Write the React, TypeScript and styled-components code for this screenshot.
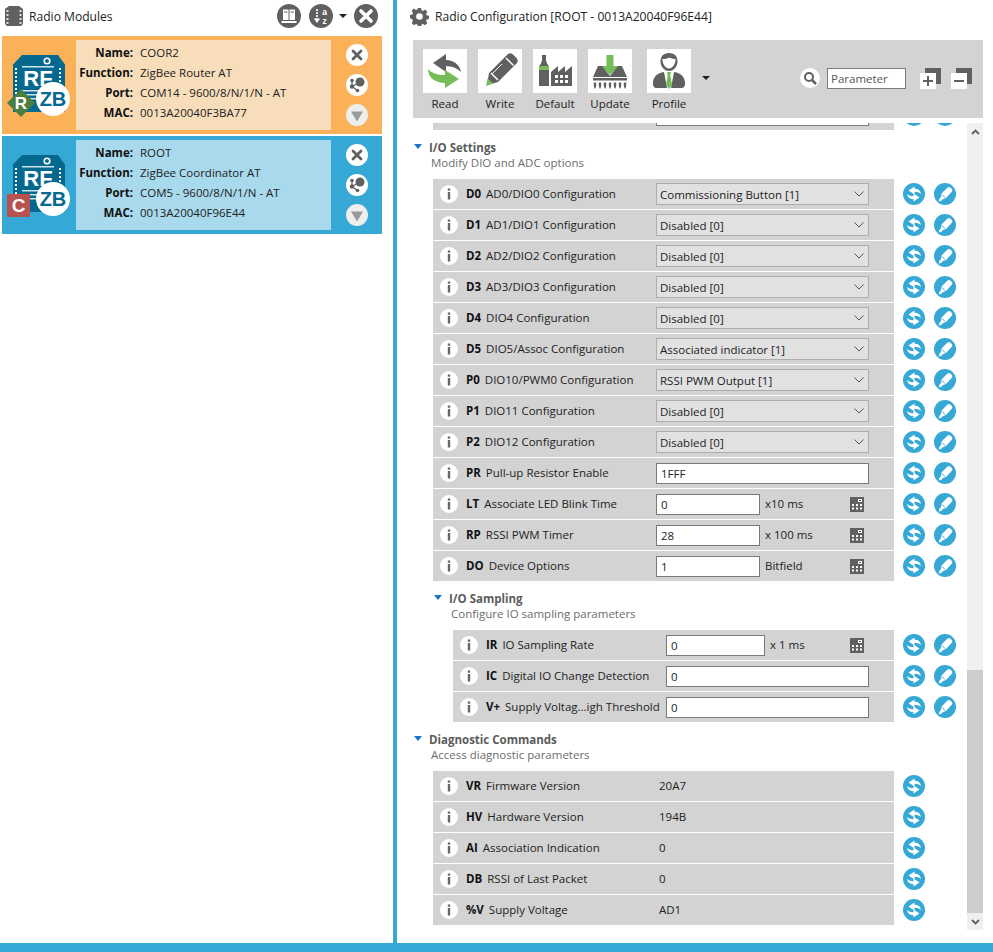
import React from 'react';
import styled, { createGlobalStyle } from 'styled-components';

const BLUE = '#36a8d6';
const GRAY = '#d3d3d3';
const ICON = '#606060';
const GREEN = '#76bd5a';

const Global = createGlobalStyle`
  html, body { margin: 0; padding: 0; background: #fff; overflow: hidden; }
  body { font-family: "Open Sans", "Noto Sans", sans-serif; font-size: 11.5px; color: #111; }
`;

const Page = styled.div`
  width: 993px;
  height: 952px;
  display: flex;
  flex-direction: column;
`;

const Main = styled.div`
  flex: 1;
  min-height: 0;
  display: flex;
`;

const BottomBar = styled.div`
  height: 9px;
  background: ${BLUE};
`;

const LeftPanel = styled.div`
  width: 393px;
  padding: 0 11px 0 2px;
  box-sizing: border-box;
`;

const Divider = styled.div`
  width: 4px;
  background: ${BLUE};
`;

const LeftHeader = styled.div`
  height: 36px;
  display: flex;
  align-items: center;
  padding: 0 4px 4px 3px;
  box-sizing: border-box;
`;

const PanelTitle = styled.div`
  font-size: 12.1px;
  color: #222;
  margin-left: 6px;
  flex: 1;
`;

const HeaderButton = styled.div<{ $gap?: number }>`
  width: 24px;
  height: 24px;
  margin-left: ${p => p.$gap ?? 0}px;
  svg { display: block; }
`;

const SmallCaret = styled.div<{ $left: number; $right: number }>`
  width: 0;
  height: 0;
  border-left: 4px solid transparent;
  border-right: 4px solid transparent;
  border-top: 4px solid #222;
  margin: 0 ${p => p.$right}px 0 ${p => p.$left}px;
`;

const Card = styled.div<{ $bg: string }>`
  height: 98px;
  background: ${p => p.$bg};
  display: flex;
  align-items: center;
  margin-bottom: 2px;
`;

const ModuleIcon = styled.div`
  width: 74px;
  height: 98px;
  flex: none;
  svg { display: block; }
`;

const CardInfo = styled.div<{ $bg: string }>`
  width: 255px;
  height: 90px;
  box-sizing: border-box;
  padding-bottom: 6px;
  background: ${p => p.$bg};
  display: grid;
  grid-template-columns: 57px 1fr;
  grid-auto-rows: 20px;
  column-gap: 7px;
  align-content: center;
  align-items: center;
`;

const CardLabel = styled.div`
  font-weight: 700;
  text-align: right;
  color: #111;
`;

const CardValue = styled.div`
  color: #222;
  white-space: nowrap;
`;

const CardActions = styled.div`
  width: 51px;
  display: flex;
  flex-direction: column;
  align-items: center;
  gap: 8px;
  svg { display: block; }
`;

const RightPanel = styled.div`
  flex: 1;
  min-width: 0;
  display: flex;
  flex-direction: column;
  padding: 0 10px 13px 16px;
`;

const RightHeader = styled.div`
  height: 40px;
  display: flex;
  align-items: center;
  padding: 0 0 8px 0;
  box-sizing: border-box;
  svg { display: block; margin-left: -3px; }
`;

const Toolbar = styled.div`
  height: 78px;
  flex: none;
  background: ${GRAY};
  display: flex;
  padding: 9px 0 0 10px;
  box-sizing: border-box;
  margin-bottom: 5px;
`;

const ToolButton = styled.div<{ $gap: number }>`
  width: 44px;
  margin-right: ${p => p.$gap}px;
  display: flex;
  flex-direction: column;
  align-items: center;
`;

const ToolTile = styled.div`
  width: 44px;
  height: 44px;
  background: #fff;
  svg { display: block; }
`;

const ToolLabel = styled.div`
  margin-top: 3px;
  line-height: 16px;
  color: #222;
  white-space: nowrap;
`;

const ProfileCaret = styled(SmallCaret)`
  margin-top: 27px;
  align-self: flex-start;
`;

const SearchGroup = styled.div`
  margin-left: auto;
  display: flex;
  align-items: flex-start;
  padding-top: 19px;
  padding-right: 11px;
  svg { display: block; }
`;

const SearchInput = styled.div`
  width: 79px;
  height: 21px;
  box-sizing: border-box;
  border: 1px solid #7a7a7a;
  background: #fff;
  margin: 0 14px 0 7px;
  padding-left: 3px;
  line-height: 19px;
  color: #555;
`;

const FoldButton = styled.div`
  width: 21px;
  height: 21px;
  margin-right: 10px;
  &:last-child { margin-right: 0; }
`;

const Body = styled.div`
  flex: 1;
  min-height: 0;
  display: flex;
`;

const Content = styled.div`
  flex: 1;
  min-width: 0;
  overflow: hidden;
`;

const Scrolled = styled.div`
  margin-top: -23px;
`;

const ScrollBar = styled.div`
  width: 16px;
  display: flex;
  flex-direction: column;
  background: #f0f0f0;
  svg { display: block; }
`;

const ScrollArrow = styled.div`
  height: 17px;
  display: flex;
  align-items: center;
  justify-content: center;
`;

const ScrollTrack = styled.div`
  flex: 1;
  display: flex;
  flex-direction: column;
  justify-content: flex-end;
`;

const ScrollThumb = styled.div`
  height: 243px;
  background: #cdcdcd;
`;

const Section = styled.div<{ $indent: number }>`
  position: relative;
  padding-left: ${p => p.$indent}px;
  height: 48px;
`;

const SectionCaret = styled.div<{ $left: number }>`
  position: absolute;
  left: ${p => p.$left}px;
  top: 13px;
  width: 0;
  height: 0;
  border-left: 4px solid transparent;
  border-right: 4px solid transparent;
  border-top: 5px solid #1373c6;
`;

const SectionTitle = styled.div`
  padding-top: 9px;
  font-weight: 700;
  line-height: 15px;
  color: #5c5c5c;
`;

const SectionSub = styled.div`
  padding-left: 2px;
  line-height: 16px;
  color: #6c6c6c;
`;

const Line = styled.div<{ $indent: number }>`
  display: flex;
  margin-left: ${p => p.$indent}px;
  margin-bottom: 1px;
`;

const Row = styled.div<{ $labelWidth: number }>`
  flex: 1;
  height: 30px;
  background: ${GRAY};
  display: grid;
  grid-template-columns: ${p => p.$labelWidth}px 1fr;
  align-items: center;
  margin-right: 9px;
`;

const RowLabel = styled.div`
  display: flex;
  align-items: center;
  padding-left: 7px;
  white-space: nowrap;
  overflow: hidden;
  svg { display: block; flex: none; margin-right: 8px; }
`;

const Code = styled.span`
  font-weight: 700;
  color: #111;
  margin: 0 5px 2px 0;
`;

const Desc = styled.span`
  color: #222;
  margin-bottom: 2px;
`;

const Control = styled.div`
  display: flex;
  align-items: center;
  padding-right: 25px;
`;

const Select = styled.div`
  flex: 1;
  height: 22px;
  box-sizing: border-box;
  border: 1px solid #adadad;
  background: #e1e1e1;
  padding: 0 4px 0 3px;
  display: flex;
  align-items: center;
  justify-content: space-between;
  color: #222;
  svg { display: block; }
`;

const TextInput = styled.div<{ $width?: number }>`
  ${p => (p.$width ? `width: ${p.$width}px;` : 'flex: 1;')}
  height: 21px;
  box-sizing: border-box;
  border: 1px solid #7a7a7a;
  background: #fff;
  padding-left: 4px;
  line-height: 19px;
  color: #222;
`;

const Unit = styled.div`
  flex: 1;
  margin: 0 0 2px 5px;
  color: #222;
  white-space: nowrap;
`;

const CalcSlot = styled.div`
  margin-right: 5px;
  svg { display: block; }
`;

const ValueText = styled.div`
  color: #222;
  margin-bottom: 2px;
`;

const Actions = styled.div`
  width: 53px;
  display: flex;
  gap: 9px;
  flex: none;
  align-items: center;
  margin-right: 11px;
  svg { display: block; }
`;

const Info = () => (
  <svg width="18" height="18" viewBox="0 0 18 18">
    <circle cx="9" cy="9" r="9" fill="#fff" />
    <rect x="7.800" y="3.500" width="2.400" height="2.200" fill="#666" />
    <rect x="7.800" y="7" width="2.400" height="7.500" fill="#666" />
  </svg>
);

const SyncIcon = () => (
  <svg width="22" height="22" viewBox="0 0 22 22">
    <circle cx="11" cy="11" r="11" fill={BLUE} />
    <path d="M18 11c-.6-3.500-3.200-5.400-6.500-5.100V3.400L5.500 7.500l6 4V8.800c2.300-.2 4.200.6 6.500 2.200z" fill="#fff" />
    <path d="M4 11c.6 3.500 3.200 5.400 6.500 5.100v2.500l6-4.100-6-4v2.700c-2.300.2-4.200-.6-6.500-2.200z" fill="#fff" />
  </svg>
);

const WriteIcon = () => (
  <svg width="22" height="22" viewBox="0 0 22 22">
    <circle cx="11" cy="11" r="11" fill={BLUE} />
    <path d="M13.500 4.500c1-.8 2-.7 2.800 0l1.500 1.500c.8.900.8 1.900 0 2.800L12 15l-3 1-1.500 1.800-2.800.7.700-2.800L7 14l.5-3.500z" fill="#fff" />
    <path d="M8 11.500l3 3" stroke={BLUE} strokeWidth="1" fill="none" />
  </svg>
);

const CalcIcon = () => (
  <svg width="14" height="15" viewBox="0 0 14 15">
    <rect width="14" height="15" fill={ICON} />
    <rect x="8" y="2" width="4" height="3" fill="#fff" />
    <rect x="9" y="3" width="2" height="1" fill={ICON} />
    {[0, 1].map(r =>
      [0, 1, 2].map(c => <rect key={`${r}-${c}`} x={2 + c * 4} y={7 + r * 3.5} width="2" height="2" fill="#fff" />)
    )}
  </svg>
);

const Chevron = () => (
  <svg width="10" height="6" viewBox="0 0 10 6">
    <path d="M.5.5L5 5 9.500.5" fill="none" stroke="#555" strokeWidth="1" />
  </svg>
);

const ChipIcon = () => (
  <svg width="18" height="20" viewBox="0 0 18 20">
    <path d="M4 0h10l4 3v15l-2 2H2l-2-2V3z" fill={ICON} />
    {[4, 8, 12, 16].map(y => (
      <g key={y}>
        <rect x="1.500" y={y} width="2" height="2" fill="#ddd" />
        <rect x="14.500" y={y} width="2" height="2" fill="#ddd" />
      </g>
    ))}
  </svg>
);

const BookIcon = () => (
  <svg width="24" height="24" viewBox="0 0 24 24">
    <circle cx="12" cy="12" r="12" fill={ICON} />
    <rect x="6" y="5.500" width="5.500" height="10.500" fill="#fff" />
    <rect x="12.500" y="5.500" width="5.500" height="10.500" fill="#fff" />
    <rect x="7" y="7.500" width="3.500" height="1" fill={ICON} />
    <rect x="13.500" y="7.500" width="3.500" height="1" fill={ICON} />
    <rect x="4.500" y="17" width="15" height="2" fill="#fff" />
  </svg>
);

const SortIcon = () => (
  <svg width="24" height="24" viewBox="0 0 24 24">
    <circle cx="12" cy="12" r="12" fill={ICON} />
    <path d="M8 5v11" stroke="#fff" strokeWidth="1.600" strokeDasharray="2 1" />
    <path d="M4.800 14.500h6.400L8 19z" fill="#fff" />
    <path d="M13 3.500h5v2h-5z" fill="none" />
    <text x="15.500" y="10.500" fontSize="8.500" fontWeight="700" fill="#fff" textAnchor="middle" fontFamily="Liberation Sans, sans-serif">a</text>
    <text x="15.500" y="20" fontSize="8.500" fontWeight="700" fill="#fff" textAnchor="middle" fontFamily="Liberation Sans, sans-serif">z</text>
  </svg>
);

const CloseDark = () => (
  <svg width="24" height="24" viewBox="0 0 24 24">
    <circle cx="12" cy="12" r="12" fill={ICON} />
    <path d="M7 7l10 10M17 7L7 17" stroke="#fff" strokeWidth="3.600" strokeLinecap="round" />
  </svg>
);

const CardClose = () => (
  <svg width="22" height="22" viewBox="0 0 22 22">
    <circle cx="11" cy="11" r="11" fill="#fff" />
    <path d="M7 7l8 8M15 7l-8 8" stroke={ICON} strokeWidth="2.800" strokeLinecap="round" />
  </svg>
);

const CardNetwork = () => (
  <svg width="22" height="22" viewBox="0 0 22 22">
    <circle cx="11" cy="11" r="11" fill="#fff" />
    <path d="M6 6.500v6M6 12.500L14 8M6 12.500l5.500 4" stroke={ICON} strokeWidth="1.200" />
    <circle cx="14" cy="8" r="4.500" fill={ICON} />
    <circle cx="6" cy="6.500" r="1.800" fill={ICON} />
    <circle cx="6" cy="12.500" r="2.200" fill={ICON} />
    <circle cx="11.500" cy="16.500" r="1.800" fill={ICON} />
  </svg>
);

const CardExpand = () => (
  <svg width="22" height="22" viewBox="0 0 22 22">
    <circle cx="11" cy="11" r="11" fill="#eeeeee" />
    <path d="M5 7.500h12L11 17.500z" fill="#9a9a9a" />
  </svg>
);

const ModuleGlyph = ({ role }: { role: 'R' | 'C' }) => (
  <svg width="74" height="98" viewBox="0 0 74 98">
    <path d="M20 19h36l7 9.500V76H11V28.500z" fill="#05698f" />
    <circle cx="45" cy="25" r="2.800" fill="none" stroke="#fff" strokeWidth="1.600" />
    <rect x="20" y="30" width="32" height="1.500" fill="#cfe3ec" />
    {[32, 36, 40, 44, 48, 52, 56, 60].map(y => (
      <g key={y}>
        <rect x="13" y={y} width="2" height="2" fill="#fff" />
        <rect x="57" y={y} width="2" height="2" fill="#fff" />
      </g>
    ))}
    <text x="36" y="50" fontSize="22" fontWeight="700" fill="#fff" textAnchor="middle" fontFamily="Liberation Sans, sans-serif">RF</text>
    <rect x="20" y="54" width="24" height="1.500" fill="#cfe3ec" />
    <rect x="20" y="58" width="24" height="1.500" fill="#cfe3ec" />
    <rect x="20" y="62" width="24" height="1.500" fill="#cfe3ec" />
    <circle cx="51" cy="63" r="17" fill="#fff" />
    <text x="51" y="70" fontSize="20" fontWeight="700" fill="#05698f" textAnchor="middle" fontFamily="Liberation Sans, sans-serif">ZB</text>
    {role === 'R' ? (
      <>
        <path d="M19 53l14 14-14 14L5 67z" fill="#4b7f3f" />
        <text x="19" y="73" fontSize="17" fontWeight="700" fill="#fff" textAnchor="middle" fontFamily="Liberation Sans, sans-serif">R</text>
      </>
    ) : (
      <>
        <rect x="5" y="58" width="23" height="23" fill="#b9514f" />
        <text x="16.500" y="75.500" fontSize="19" fontWeight="700" fill="#fff" textAnchor="middle" fontFamily="Liberation Sans, sans-serif">C</text>
      </>
    )}
  </svg>
);

const ReadGlyph = () => (
  <svg width="44" height="44" viewBox="0 0 44 44">
    <path d="M38 23c-1-7-7-12-15-12V5L10 14l13 9v-6c6 0 11 2 15 6z" fill={ICON} />
    <path d="M5 20c0 9 8 14 17 14v5l14-9-14-9v5c-8 0-13-2-17-6z" fill={GREEN} />
  </svg>
);

const WriteGlyph = () => (
  <svg width="44" height="44" viewBox="0 0 44 44">
    <path d="M30 5c2-1 3-1 5 .5l3.500 3.500c1.500 2 1.500 3 .5 5L20 33l-11 3 2-12z" fill={ICON} />
    <path d="M28 9l7.500 7.500M13 24l7 7" stroke="#fff" strokeWidth="1.500" fill="none" />
    <path d="M24 15L14 25" stroke="#fff" strokeWidth="1" fill="none" />
    <path d="M8 37l1.500-7.500 6 5z" fill={GREEN} />
  </svg>
);

const DefaultGlyph = () => (
  <svg width="44" height="44" viewBox="0 0 44 44">
    <path d="M6 37V18c0-2 3-3 3-8V6h4v4c0 5 3 6 3 8v19z" fill={ICON} />
    <rect x="6" y="17" width="10" height="4" fill={GREEN} />
    <path d="M18 37V23l7-6v6l7-6v6l7-6v20z" fill={ICON} />
    {[0, 1].map(r =>
      [0, 1, 2].map(c => <rect key={`${r}-${c}`} x={22 + c * 5} y={26 + r * 5} width="3" height="3" fill="#fff" />)
    )}
  </svg>
);

const UpdateGlyph = () => (
  <svg width="44" height="44" viewBox="0 0 44 44">
    <path d="M18.500 6h7v11h5.500L22 26l-9-9h5.500z" fill={GREEN} />
    <path d="M10 17h4l8 10 8-10h4l5 11H5z" fill={ICON} />
    <rect x="5" y="29" width="34" height="2.500" fill={ICON} />
    {[7, 12, 17, 22, 27, 32, 37].map(x => (
      <path key={x} d="M0 0h2.400v3l-.7 3h-1l-.7-3z" transform={`translate(${x - 1.2} 33.500)`} fill={ICON} />
    ))}
  </svg>
);

const ProfileGlyph = () => (
  <svg width="44" height="44" viewBox="0 0 44 44">
    <path d="M22 4c6 0 8.500 4 8.500 8.500S27 22 22 22s-8.500-5-8.500-9.500S16 4 22 4z" fill={ICON} />
    <path d="M22 8.500c3 1.500 5.500 1.500 6.500 1.500.3 4-2.500 9.500-6.500 9.500s-6.800-5.500-6.500-9.500c2.500 0 5-.5 6.500-1.500z" fill="#fff" />
    <path d="M17 23l3 16H10c-3 0-4.500-2-4-6 .5-5 4-9 11-10zM27 23l-3 16h10c3 0 4.500-2 4-6-.5-5-4-9-11-10z" fill={ICON} />
    <path d="M20 23h4l-.7 3 1.700 10-3 4-3-4 1.700-10z" fill={GREEN} />
  </svg>
);

const SearchIcon = () => (
  <svg width="20" height="20" viewBox="0 0 20 20">
    <circle cx="10" cy="10" r="10" fill="#fff" />
    <circle cx="9" cy="9" r="4" fill="none" stroke={ICON} strokeWidth="2" />
    <path d="M12 12l4 4" stroke={ICON} strokeWidth="2.500" />
  </svg>
);

const Fold = ({ plus }: { plus?: boolean }) => (
  <svg width="21" height="21" viewBox="0 0 21 21">
    <rect x="5" width="16" height="16" fill={ICON} />
    <rect y="5" width="16" height="16" fill="#fff" />
    <rect x="3" y="12" width="10" height="2" fill={ICON} />
    {plus && <rect x="7" y="8" width="2" height="10" fill={ICON} />}
  </svg>
);

const GearIcon = () => (
  <svg width="19" height="19" viewBox="0 0 20 20">
    <path
      d="M8.300 1h3.400l.5 2.500 1.500.6 2.200-1.400 2.400 2.400-1.400 2.200.6 1.500 2.500.5v3.400l-2.500.5-.6 1.500 1.400 2.200-2.400 2.400-2.200-1.400-1.500.6-.5 2.500H8.300l-.5-2.500-1.500-.6-2.200 1.400-2.400-2.400 1.400-2.200-.6-1.500L0 11.700V8.300l2.500-.5.6-1.500-1.400-2.200 2.400-2.400 2.200 1.400 1.500-.6z"
      fill={ICON}
    />
    <circle cx="10" cy="10" r="3.500" fill="#fff" />
  </svg>
);

type Field =
  | { kind: 'select'; value: string }
  | { kind: 'text'; value: string }
  | { kind: 'num'; value: string; unit: string; width: number }
  | { kind: 'read'; value: string };

type Param = { code: string; desc: string; field: Field };

const ioRows: Param[] = [
  { code: 'D0', desc: 'AD0/DIO0 Configuration', field: { kind: 'select', value: 'Commissioning Button [1]' } },
  { code: 'D1', desc: 'AD1/DIO1 Configuration', field: { kind: 'select', value: 'Disabled [0]' } },
  { code: 'D2', desc: 'AD2/DIO2 Configuration', field: { kind: 'select', value: 'Disabled [0]' } },
  { code: 'D3', desc: 'AD3/DIO3 Configuration', field: { kind: 'select', value: 'Disabled [0]' } },
  { code: 'D4', desc: 'DIO4 Configuration', field: { kind: 'select', value: 'Disabled [0]' } },
  { code: 'D5', desc: 'DIO5/Assoc Configuration', field: { kind: 'select', value: 'Associated indicator [1]' } },
  { code: 'P0', desc: 'DIO10/PWM0 Configuration', field: { kind: 'select', value: 'RSSI PWM Output [1]' } },
  { code: 'P1', desc: 'DIO11 Configuration', field: { kind: 'select', value: 'Disabled [0]' } },
  { code: 'P2', desc: 'DIO12 Configuration', field: { kind: 'select', value: 'Disabled [0]' } },
  { code: 'PR', desc: 'Pull-up Resistor Enable', field: { kind: 'text', value: '1FFF' } },
  { code: 'LT', desc: 'Associate LED Blink Time', field: { kind: 'num', value: '0', unit: 'x10 ms', width: 104 } },
  { code: 'RP', desc: 'RSSI PWM Timer', field: { kind: 'num', value: '28', unit: 'x 100 ms', width: 104 } },
  { code: 'DO', desc: 'Device Options', field: { kind: 'num', value: '1', unit: 'Bitfield', width: 104 } },
];

const samplingRows: Param[] = [
  { code: 'IR', desc: 'IO Sampling Rate', field: { kind: 'num', value: '0', unit: 'x 1 ms', width: 99 } },
  { code: 'IC', desc: 'Digital IO Change Detection', field: { kind: 'text', value: '0' } },
  { code: 'V+', desc: 'Supply Voltag...igh Threshold', field: { kind: 'text', value: '0' } },
];

const diagRows: Param[] = [
  { code: 'VR', desc: 'Firmware Version', field: { kind: 'read', value: '20A7' } },
  { code: 'HV', desc: 'Hardware Version', field: { kind: 'read', value: '194B' } },
  { code: 'AI', desc: 'Association Indication', field: { kind: 'read', value: '0' } },
  { code: 'DB', desc: 'RSSI of Last Packet', field: { kind: 'read', value: '0' } },
  { code: '%V', desc: 'Supply Voltage', field: { kind: 'read', value: 'AD1' } },
];

const FieldView = ({ field }: { field: Field }) => {
  if (field.kind === 'select') {
    return (
      <Select>
        {field.value}
        <Chevron />
      </Select>
    );
  }
  if (field.kind === 'text') return <TextInput>{field.value}</TextInput>;
  if (field.kind === 'read') return <ValueText>{field.value}</ValueText>;
  return (
    <>
      <TextInput $width={field.width}>{field.value}</TextInput>
      <Unit>{field.unit}</Unit>
      <CalcSlot>
        <CalcIcon />
      </CalcSlot>
    </>
  );
};

const ParamLine = ({ item, indent, labelWidth }: { item: Param; indent: number; labelWidth: number }) => (
  <Line $indent={indent}>
    <Row $labelWidth={labelWidth}>
      <RowLabel>
        <Info />
        <Code>{item.code}</Code>
        <Desc>{item.desc}</Desc>
      </RowLabel>
      <Control>
        <FieldView field={item.field} />
      </Control>
    </Row>
    <Actions>
      <SyncIcon />
      {item.field.kind !== 'read' && <WriteIcon />}
    </Actions>
  </Line>
);

const modules = [
  {
    role: 'R' as const,
    bg: '#fbb158',
    inner: '#f8ddbb',
    name: 'COOR2',
    func: 'ZigBee Router AT',
    port: 'COM14 - 9600/8/N/1/N - AT',
    mac: '0013A20040F3BA77',
  },
  {
    role: 'C' as const,
    bg: BLUE,
    inner: '#a9d9ed',
    name: 'ROOT',
    func: 'ZigBee Coordinator AT',
    port: 'COM5 - 9600/8/N/1/N - AT',
    mac: '0013A20040F96E44',
  },
];

const tools = [
  { label: 'Read', icon: <ReadGlyph />, gap: 11 },
  { label: 'Write', icon: <WriteGlyph />, gap: 11 },
  { label: 'Default', icon: <DefaultGlyph />, gap: 11 },
  { label: 'Update', icon: <UpdateGlyph />, gap: 15 },
  { label: 'Profile', icon: <ProfileGlyph />, gap: 11 },
];

function App() {
  return (
    <Page>
      <Global />
      <Main>
        <LeftPanel>
          <LeftHeader>
            <ChipIcon />
            <PanelTitle>Radio Modules</PanelTitle>
            <HeaderButton>
              <BookIcon />
            </HeaderButton>
            <HeaderButton $gap={8}>
              <SortIcon />
            </HeaderButton>
            <SmallCaret $left={6} $right={7} />
            <HeaderButton>
              <CloseDark />
            </HeaderButton>
          </LeftHeader>
          {modules.map(m => (
            <Card key={m.name} $bg={m.bg}>
              <ModuleIcon>
                <ModuleGlyph role={m.role} />
              </ModuleIcon>
              <CardInfo $bg={m.inner}>
                <CardLabel>Name:</CardLabel>
                <CardValue>{m.name}</CardValue>
                <CardLabel>Function:</CardLabel>
                <CardValue>{m.func}</CardValue>
                <CardLabel>Port:</CardLabel>
                <CardValue>{m.port}</CardValue>
                <CardLabel>MAC:</CardLabel>
                <CardValue>{m.mac}</CardValue>
              </CardInfo>
              <CardActions>
                <CardClose />
                <CardNetwork />
                <CardExpand />
              </CardActions>
            </Card>
          ))}
        </LeftPanel>
        <Divider />
        <RightPanel>
          <RightHeader>
            <GearIcon />
            <PanelTitle>Radio Configuration [ROOT - 0013A20040F96E44]</PanelTitle>
          </RightHeader>
          <Toolbar>
            {tools.map(t => (
              <ToolButton key={t.label} $gap={t.gap}>
                <ToolTile>{t.icon}</ToolTile>
                <ToolLabel>{t.label}</ToolLabel>
              </ToolButton>
            ))}
            <ProfileCaret $left={0} $right={0} />
            <SearchGroup>
              <SearchIcon />
              <SearchInput>Parameter</SearchInput>
              <FoldButton>
                <Fold plus />
              </FoldButton>
              <FoldButton>
                <Fold />
              </FoldButton>
            </SearchGroup>
          </Toolbar>
          <Body>
            <Content>
              <Scrolled>
                <Line $indent={20}>
                  <Row $labelWidth={223}>
                    <div />
                    <Control>
                      <TextInput />
                    </Control>
                  </Row>
                  <Actions>
                    <SyncIcon />
                    <WriteIcon />
                  </Actions>
                </Line>
                <Section $indent={16}>
                  <SectionCaret $left={1} />
                  <SectionTitle>I/O Settings</SectionTitle>
                  <SectionSub>Modify DIO and ADC options</SectionSub>
                </Section>
                {ioRows.map(item => (
                  <ParamLine key={item.code} item={item} indent={20} labelWidth={223} />
                ))}
                <Section $indent={36}>
                  <SectionCaret $left={21} />
                  <SectionTitle>I/O Sampling</SectionTitle>
                  <SectionSub>Configure IO sampling parameters</SectionSub>
                </Section>
                {samplingRows.map(item => (
                  <ParamLine key={item.code} item={item} indent={40} labelWidth={213} />
                ))}
                <Section $indent={16}>
                  <SectionCaret $left={1} />
                  <SectionTitle>Diagnostic Commands</SectionTitle>
                  <SectionSub>Access diagnostic parameters</SectionSub>
                </Section>
                {diagRows.map(item => (
                  <ParamLine key={item.code} item={item} indent={20} labelWidth={226} />
                ))}
              </Scrolled>
            </Content>
            <ScrollBar>
              <ScrollArrow>
                <svg width="9" height="6" viewBox="0 0 9 6">
                  <path d="M1 5l3.500-3.500L8 5" fill="none" stroke="#606060" strokeWidth="1.800" />
                </svg>
              </ScrollArrow>
              <ScrollTrack>
                <ScrollThumb />
              </ScrollTrack>
              <ScrollArrow>
                <svg width="9" height="6" viewBox="0 0 9 6">
                  <path d="M1 1l3.500 3.500L8 1" fill="none" stroke="#606060" strokeWidth="1.800" />
                </svg>
              </ScrollArrow>
            </ScrollBar>
          </Body>
        </RightPanel>
      </Main>
      <BottomBar />
    </Page>
  );
}

export default App;
